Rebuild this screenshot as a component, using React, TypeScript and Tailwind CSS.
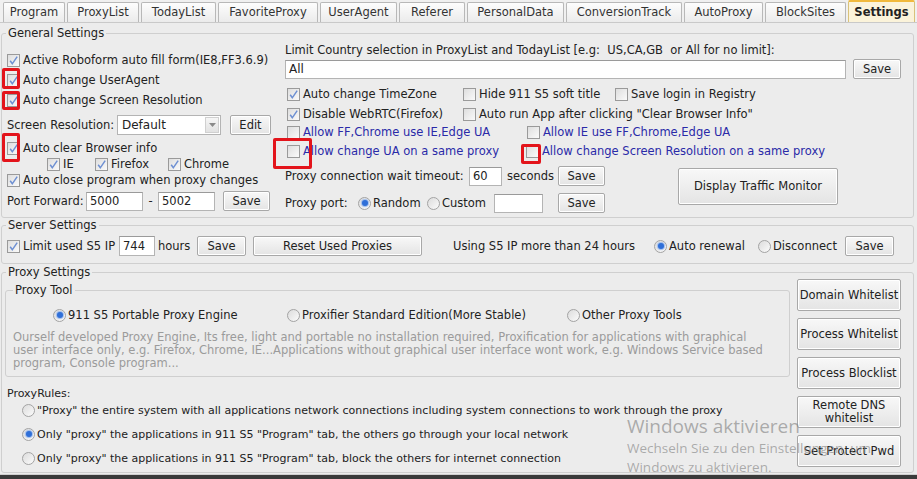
import React from "react";

const tabs = [
  { name: "Program", w: "w-[62px]" },
  { name: "ProxyList", w: "w-[72px]" },
  { name: "TodayList", w: "w-[75px]" },
  { name: "FavoriteProxy", w: "w-[100px]" },
  { name: "UserAgent", w: "w-[77px]" },
  { name: "Referer", w: "w-[66px]" },
  { name: "PersonalData", w: "w-[97px]" },
  { name: "ConversionTrack", w: "w-[116px]" },
  { name: "AutoProxy", w: "w-[79px]" },
  { name: "BlockSites", w: "w-[81px]" },
];

function Box({ checked }: { checked?: boolean }) {
  return (
    <span className="w-[13px] h-[13px] shrink-0 border border-[#9a9a9a] bg-linear-to-br from-[#dedede] to-[#fafafa] flex items-center justify-center">
      {checked && (
        <svg width="11" height="11" viewBox="0 0 11 11">
          <path d="M2.2 5.8 L4.3 8.8 L9.2 1.6" stroke="#6d8fd2" strokeWidth="1.5" fill="none" />
        </svg>
      )}
    </span>
  );
}

function Check({
  label,
  checked,
  className = "",
  blue,
}: {
  label: string;
  checked?: boolean;
  className?: string;
  blue?: boolean;
}) {
  return (
    <div className={`flex items-center gap-[3px] shrink-0 whitespace-nowrap ${className}`}>
      <Box checked={checked} />
      <span className={blue ? "text-[#2a2aa8]" : ""}>{label}</span>
    </div>
  );
}

function Radio({ label, checked, className = "" }: { label: string; checked?: boolean; className?: string }) {
  return (
    <div className={`flex items-center gap-[2px] shrink-0 whitespace-nowrap ${className}`}>
      <span className="w-[13px] h-[13px] rounded-full border border-[#a3a3a3] bg-linear-to-br from-[#dcdcdc] to-[#fbfbfb] flex items-center justify-center shrink-0">
        {checked && <span className="w-[6px] h-[6px] rounded-full bg-[#2f6fd8] shadow-[0_0_1px_1px_#9dbbec]" />}
      </span>
      <span>{label}</span>
    </div>
  );
}

function Btn({ children, className = "" }: { children: React.ReactNode; className?: string }) {
  return (
    <div
      className={`shrink-0 flex items-center justify-center text-center border border-[#a8a8a8] rounded-[2px] bg-linear-to-b from-[#f8f8f8] to-[#e4e4e4] shadow-[inset_0_0_0_1px_#ffffff] leading-[13px] ${className}`}
    >
      {children}
    </div>
  );
}

function Field({ value = "", className = "" }: { value?: string; className?: string }) {
  return (
    <div className={`shrink-0 h-[19px] bg-white border border-[#b4b4b4] border-t-[#9a9a9a] flex items-center pl-[3px] ${className}`}>
      {value}
    </div>
  );
}

function Group({
  title,
  className = "",
  legendClass = "ml-[4px]",
  children,
}: {
  title: string;
  className?: string;
  legendClass?: string;
  children: React.ReactNode;
}) {
  return (
    <fieldset className={`border border-[#cfcfcf] rounded-[3px] ${className}`}>
      <legend className={`px-[2px] leading-[13px] ${legendClass}`}>{title}</legend>
      {children}
    </fieldset>
  );
}

function RedMark({ className }: { className: string }) {
  return <div className={`absolute border-[3px] border-[#e3141b] rounded-[2px] pointer-events-none ${className}`} />;
}

export default function App() {
  return (
    <div className="relative w-[917px] h-[479px] overflow-hidden bg-[#ececec] text-[11.5px] leading-[13px] text-[#222] font-['DejaVu_Sans',Verdana,sans-serif] flex flex-col">
      {/* tabs */}
      <div className="h-[22px] flex items-end gap-[2px] pl-[3px] bg-[#f0f0f0] shrink-0">
        {tabs.map((t) => (
          <div
            key={t.name}
            className={`${t.w} h-[20px] flex items-center justify-center border border-b-0 border-[#b8b8b8] rounded-t-[2px] bg-linear-to-b from-[#fdfdfd] to-[#ebebeb] text-[#333]`}
          >
            {t.name}
          </div>
        ))}
        <div className="w-[67px] h-[22px] flex items-center justify-center border border-b-0 border-[#d9c27a] border-t-2 border-t-[#f1b93c] rounded-t-[2px] bg-[#fbf3da] font-bold">
          Settings
        </div>
      </div>

      {/* panel */}
      <div className="flex-1 flex flex-col border-t border-[#c9c9c9] pl-[1px] pr-[3px]">
        {/* General Settings */}
        <Group title="General Settings" className="mt-[4px] h-[191px]">
          <div className="flex">
            <div className="w-[283px] pl-[5px] pt-[11px] flex flex-col">
              <Check checked label="Active Roboform auto fill form(IE8,FF3.6.9)" className="h-[19px]" />
              <Check checked label="Auto change UserAgent" className="h-[20px]" />
              <Check checked label="Auto change Screen Resolution" className="h-[21px]" />
              <div className="h-[28px] flex items-center">
                <span className="w-[110px] whitespace-nowrap">Screen Resolution:</span>
                <div className="w-[104px] h-[20px] bg-white border border-[#b4b4b4] flex items-center">
                  <span className="flex-1 pl-[4px] text-[12px]">Default</span>
                  <span className="w-[14px] h-[16px] mr-[1px] border border-[#d0d0d0] bg-linear-to-b from-[#f6f6f6] to-[#e2e2e2] flex items-center justify-center">
                    <svg width="7" height="4" viewBox="0 0 7 4">
                      <path d="M0 0 L7 0 L3.5 4 Z" fill="#8a8a8a" />
                    </svg>
                  </span>
                </div>
                <Btn className="ml-[9px] w-[41px] h-[20px]">Edit</Btn>
              </div>
              <Check checked label="Auto clear Browser info" className="h-[19px]" />
              <div className="h-[13px] flex items-center pl-[40px]">
                <Check checked label="IE" className="w-[48px]" />
                <Check checked label="Firefox" className="w-[73px]" />
                <Check checked label="Chrome" />
              </div>
              <Check checked label="Auto close program when proxy changes" className="h-[19px]" />
              <div className="h-[22px] flex items-center">
                <span className="w-[79px] whitespace-nowrap">Port Forward:</span>
                <Field value="5000" className="w-[57px]" />
                <span className="w-[15px] text-center">-</span>
                <Field value="5002" className="w-[57px]" />
                <Btn className="ml-[8px] w-[47px] h-[20px]">Save</Btn>
              </div>
            </div>

            <div className="flex-1 flex flex-col pt-[3px]">
              <div className="h-[15px] flex items-center whitespace-nowrap">
                Limit Country selection in ProxyList and TodayList [e.g:&nbsp; US,CA,GB&nbsp; or All for no limit]:
              </div>
              <div className="mt-[1px] flex items-center">
                <Field value="All" className="w-[561px] text-[12px]" />
                <Btn className="ml-[7px] w-[48px] h-[20px]">Save</Btn>
              </div>
              <div className="mt-[6px] h-[19px] flex items-center pl-[2px]">
                <Check checked label="Auto change TimeZone" className="w-[176px]" />
                <Check label="Hide 911 S5 soft title" className="w-[152px]" />
                <Check label="Save login in Registry" />
              </div>
              <div className="h-[20px] flex items-center pl-[2px]">
                <Check checked label="Disable WebRTC(Firefox)" className="w-[176px]" />
                <Check label={'Auto run App after clicking "Clear Browser Info"'} />
              </div>
              <div className="h-[16px] flex items-center pl-[2px]">
                <Check blue label="Allow FF,Chrome use IE,Edge UA" className="w-[240px]" />
                <Check blue label="Allow IE use FF,Chrome,Edge UA" />
              </div>
              <div className="h-[23px] flex items-center pl-[2px]">
                <Check blue label="Allow change UA on a same proxy" className="w-[239px]" />
                <Check blue label="Allow change Screen Resolution on a same proxy" />
              </div>
              <div className="mt-[2px] flex">
                <div className="w-[320px] flex flex-col">
                  <div className="h-[22px] flex items-center">
                    <span className="w-[184px] whitespace-nowrap">Proxy connection wait timeout:</span>
                    <Field value="60" className="w-[33px]" />
                    <span className="w-[56px] pl-[5px]">seconds</span>
                    <Btn className="w-[47px] h-[20px]">Save</Btn>
                  </div>
                  <div className="mt-[4px] h-[24px] flex items-center">
                    <span className="w-[73px] whitespace-nowrap">Proxy port:</span>
                    <Radio checked label="Random" className="w-[69px]" />
                    <Radio label="Custom" className="w-[67px]" />
                    <Field className="w-[49px]" />
                    <Btn className="ml-[15px] w-[47px] h-[20px]">Save</Btn>
                  </div>
                </div>
                <Btn className="ml-[73px] mt-[3px] w-[160px] h-[37px]">Display Traffic Monitor</Btn>
              </div>
            </div>
          </div>
        </Group>

        {/* Server Settings */}
        <Group title="Server Settings" className="mt-[1px] h-[45px]">
          <div className="mt-[3px] h-[22px] flex items-center pl-[5px]">
            <Check checked label="Limit used S5 IP" className="w-[112px]" />
            <Field value="744" className="w-[36px] h-[20px]" />
            <span className="w-[42px] pl-[3px]">hours</span>
            <Btn className="w-[49px] h-[20px]">Save</Btn>
            <Btn className="ml-[7px] w-[169px] h-[20px]">Reset Used Proxies</Btn>
            <span className="w-[232px] pl-[31px] whitespace-nowrap">Using S5 IP more than 24 hours</span>
            <Radio checked label="Auto renewal" className="w-[104px]" />
            <Radio label="Disconnect" className="w-[87px]" />
            <Btn className="w-[49px] h-[20px]">Save</Btn>
          </div>
        </Group>

        {/* Proxy Settings */}
        <Group title="Proxy Settings" className="mt-[2px] h-[207px]">
          <div className="flex">
            <div className="w-[788px] flex flex-col">
              <Group title="Proxy Tool" legendClass="ml-[7px]" className="ml-[3px] mt-[5px] w-[785px] h-[93px]">
                <div className="mt-[11px] h-[14px] flex items-center pl-[47px]">
                  <Radio checked label="911 S5 Portable Proxy Engine" className="w-[234px]" />
                  <Radio label="Proxifier Standard Edition(More Stable)" className="w-[280px]" />
                  <Radio label="Other Proxy Tools" />
                </div>
                <div className="mt-[9px] pl-[7px] text-[#9b9b9b] whitespace-nowrap">
                  <div>
                    Ourself developed Proxy Engine, Its free, light and portable no installation required, Proxification for applications with graphical
                  </div>
                  <div>
                    user interface only, e.g. Firefox, Chrome, IE...Applications without graphical user interface wont work, e.g. Windows Service based
                  </div>
                  <div>program, Console program...</div>
                </div>
              </Group>
              <div className="mt-[10px] pl-[5px] h-[11px] text-[11px]">ProxyRules:</div>
              <div className="pl-[20px] flex flex-col text-[11px]">
                <Radio
                  label={'"Proxy" the entire system with all applications network connections including system connections to work through the proxy'}
                  className="h-[24px]"
                />
                <Radio
                  checked
                  label={'Only "proxy" the applications in 911 S5 "Program" tab, the others go through your local network'}
                  className="h-[24px]"
                />
                <Radio
                  label={'Only "proxy" the applications in 911 S5 "Program" tab, block the others for internet connection'}
                  className="h-[24px]"
                />
              </div>
            </div>
            <div className="ml-[7px] w-[104px] flex flex-col gap-[7px]">
              <Btn className="h-[32px]">Domain Whitelist</Btn>
              <Btn className="h-[32px]">Process Whitelist</Btn>
              <Btn className="h-[32px]">Process Blocklist</Btn>
              <Btn className="h-[32px]">
                Remote DNS
                <br />
                whitelist
              </Btn>
              <Btn className="h-[32px]">Set Protect Pwd</Btn>
            </div>
          </div>
        </Group>
      </div>

      {/* window bottom border */}
      <div className="relative z-10 h-[5px] shrink-0 border-t border-[#cfcfcf] bg-[#3a3a3a]" />

      {/* highlight marks */}
      <RedMark className="left-[2px] top-[68px] w-[18px] h-[21px]" />
      <RedMark className="left-[2px] top-[91px] w-[18px] h-[19px]" />
      <RedMark className="left-[2px] top-[133px] w-[18px] h-[29px]" />
      <RedMark className="left-[273px] top-[138px] w-[39px] h-[31px]" />
      <RedMark className="left-[521px] top-[144px] w-[20px] h-[20px]" />

      {/* activation watermark */}
      <div className="absolute left-[627px] top-[413px] pointer-events-none text-[rgba(140,140,140,0.7)] font-['Open_Sans',sans-serif] whitespace-nowrap">
        <div className="text-[19px] leading-[26px]">Windows aktivieren</div>
        <div className="text-[13.5px] leading-[19px]">Wechseln Sie zu den Einstellungen, um</div>
        <div className="text-[13.5px] leading-[18px]">Windows zu aktivieren.</div>
      </div>
    </div>
  );
}
